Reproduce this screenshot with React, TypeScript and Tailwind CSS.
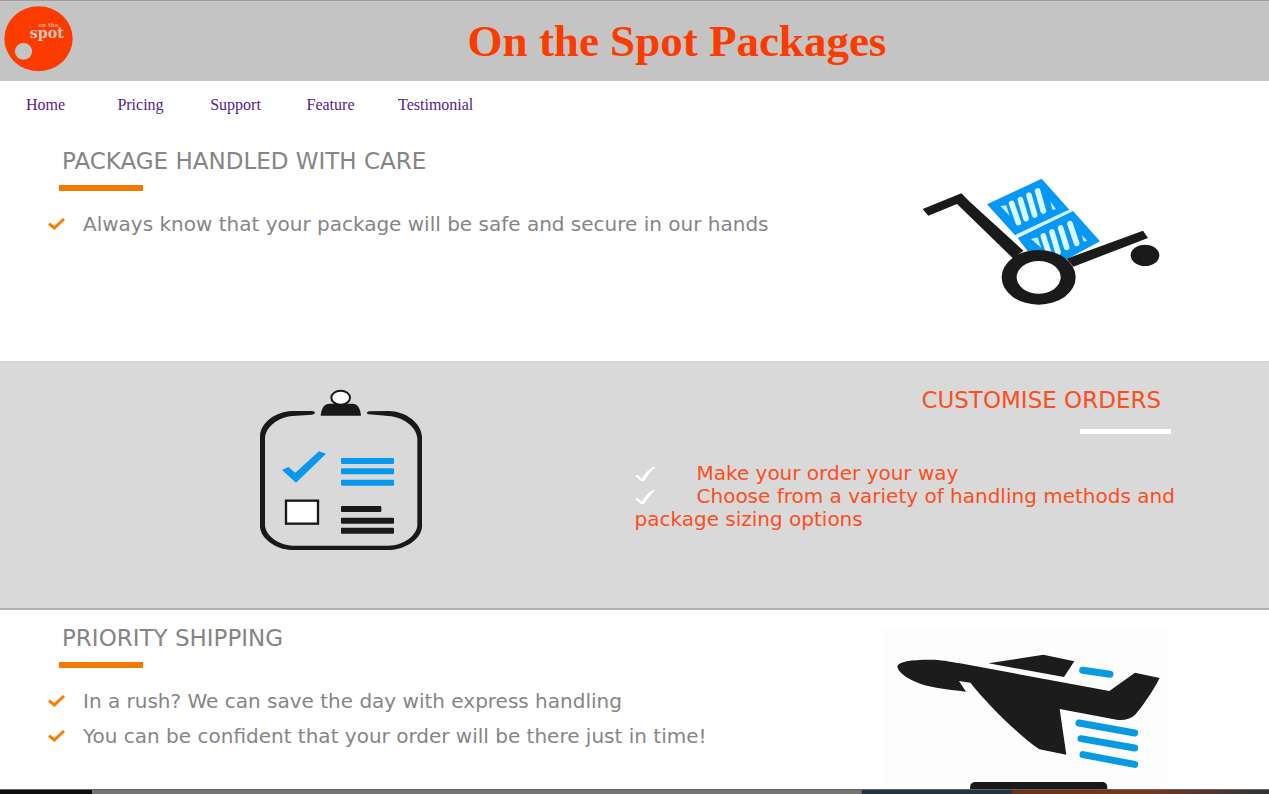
import React from "react";

const navItems = ["Home", "Pricing", "Support", "Feature", "Testimonial"];

function Logo() {
  return (
    <svg viewBox="0 0 207 198" className="h-[66px] w-[69px]" role="img" aria-label="On the Spot">
      <ellipse cx="103.5" cy="98" rx="102.5" ry="97.5" fill="#fb3b00" />
      <ellipse cx="58.5" cy="136" rx="26" ry="25" fill="#c4c4c4" />
      <text fontWeight="700" fontFamily="DejaVu Serif, serif">
        <tspan x="103" y="62" fontSize="17" fill="#dda793">on the</tspan>
        <tspan x="77" y="96" fontSize="43" fill="#cfc0ba">spot</tspan>
      </text>
    </svg>
  );
}

function Tick({ className }: { className: string }) {
  return (
    <svg viewBox="0 0 51 36" className={className} fill="none" stroke="currentColor" aria-hidden="true">
      <path d="M3 17 L19 30 L48 3" strokeWidth="9" />
    </svg>
  );
}

function LightTick() {
  return (
    <svg viewBox="0 0 63 48" className="inline-block h-4 w-[21px] text-white" fill="currentColor" aria-hidden="true">
      <path d="M0 27 L8 23 L20 35 C31 19 41 6 54 0 L61 0 C49 11 37 26 27 43 L19 43 Z" />
    </svg>
  );
}

function CartIcon() {
  return (
    <svg viewBox="0 0 870 480" className="h-[160px] w-[290px] shrink-0" role="img" aria-label="Hand truck with parcels">
      <path d="M261 133 L425 56 L508 149 L345 226 Z" fill="#0798f5" />
      <path d="M353 234 L519 153 L600 244 L500 298 L430 276 L385 276 Z" fill="#0798f5" />
      <g stroke="#d8f8fc" strokeWidth="17" strokeLinecap="round" fill="none">
        <path d="M335 130 L355 188 M361 119 L378 176 M387 106 L404 165 M413 93 L430 153" />
        <path d="M430 228 L446 278 M456 216 L474 277 M482 204 L500 262 M510 191 L530 250" />
      </g>
      <path d="M301 138 L319 136 L329 168 Z M451 124 L468 148 L457 149 Z M393 237 L413 232 L424 264 Z M545 225 L562 242 L551 245 Z" fill="#c0f0fa" />
      <path d="M346 229 L512 151" stroke="#c7f6f7" strokeWidth="7" />
      <path d="M68 147 L184 100 L210 126 L370 272 L340 296 L171 132 L85 167 Z" fill="#1b1a1a" />
      <path d="M500 296 L729 212 L744 234 L520 320 Z" fill="#1b1a1a" />
      <ellipse cx="416" cy="352" rx="111" ry="82" fill="#1b1a1a" />
      <ellipse cx="416" cy="352" rx="66" ry="49" fill="#ffffff" />
      <ellipse cx="735" cy="286" rx="43" ry="32" fill="#1b1a1a" />
    </svg>
  );
}

function ClipboardIcon() {
  return (
    <svg viewBox="0 0 600 570" className="h-[190px] w-[200px] shrink-0" role="img" aria-label="Order checklist">
      <path d="M216 108 L155 108 C110 110 61 140 60 185 L60 455 C62 490 106 523 155 525 L450 525 C500 522 544 490 546 455 L546 185 C544 145 498 108 445 108 L388 109 C378 111 378 117 388 118 L445 123 C490 126 529 155 532 190 L532 452 C529 482 490 511 445 512 L158 512 C115 510 78 482 75 452 L75 190 C77 155 115 126 158 123 L216 119 C228 117 228 110 216 108 Z" fill="#191919" />
      <path d="M242 122 C244 100 252 86 270 86 L337 86 C353 86 361 100 363 122 Z" fill="#191919" />
      <ellipse cx="302" cy="68" rx="28" ry="21" fill="#ffffff" stroke="#191919" strokeWidth="6" />
      <path d="M126 285 L145 276 L166 293 L237 229 L258 236 L168 323 Z" fill="#0798ec" />
      <g fill="#0798ec">
        <rect x="303" y="249" width="159" height="18" rx="3" />
        <rect x="303" y="280" width="159" height="18" rx="3" />
        <rect x="303" y="314" width="159" height="18" rx="3" />
      </g>
      <rect x="138" y="377" width="96" height="69" fill="#ffffff" stroke="#191919" strokeWidth="7" />
      <g fill="#191919">
        <rect x="303" y="393" width="121" height="18" rx="3" />
        <rect x="303" y="428" width="159" height="18" rx="3" />
        <rect x="303" y="458" width="159" height="18" rx="3" />
      </g>
    </svg>
  );
}

function PlaneIcon() {
  return (
    <svg viewBox="36 24 858 483" className="h-[161px] w-[286px] shrink-0 bg-[#fdfdfd]" role="img" aria-label="Cargo plane taking off">
      <path d="M82 138 C88 125 120 119 180 119 C215 119 235 124 270 130 L718 213 L795 158 L869 174 C845 220 815 262 795 285 C780 298 760 302 740 299 L569 267 L589 404 L508 388 C445 345 355 255 301 188 L267 183 L288 215 C230 209 170 201 140 187 C105 173 82 153 82 138 Z" fill="#1d1c1c" />
      <path d="M355 130 L520 104 L613 124 L582 171 Z" fill="#1d1c1c" />
      <g stroke="#079ae0" strokeLinecap="round" strokeWidth="21" fill="none">
        <path d="M638 151 L720 163" />
        <path d="M627 309 L794 339" />
        <path d="M633 356 L794 384" />
        <path d="M639 404 L794 433" />
      </g>
      <path d="M300 507 C300 492 304 486 318 486 L696 486 C708 486 712 492 712 507 Z" fill="#1b1a1a" />
    </svg>
  );
}

interface FeatureProps {
  title: string;
  points: string[];
  children: React.ReactNode;
}

function Feature({ title, points, children }: FeatureProps) {
  return (
    <section className="flex items-start justify-between gap-6">
      <div className="min-w-0 pl-12">
        <h2 className="pl-[14px] text-[23px] leading-6 text-[#858585]">{title}</h2>
        <div className="mt-3 ml-[11px] h-[6px] w-[84px] bg-[#f47900]" />
        <ul className="mt-[21px] flex flex-col gap-[11px] text-[20px] leading-6 text-[#858585]">
          {points.map((point) => (
            <li key={point} className="flex items-center gap-[18px]">
              <Tick className="h-3 w-[17px] shrink-0 text-[#ff7a00]" />
              {point}
            </li>
          ))}
        </ul>
      </div>
      {children}
    </section>
  );
}

export default function App() {
  return (
    <div className="bg-white font-['DejaVu_Sans',sans-serif]">
      <header className="flex items-center border-t border-[#9d9d9d] bg-[#c4c4c4] pt-[5px] pb-[9px] pl-1">
        <Logo />
        <h1 className="flex-1 pt-1 pl-3 text-center font-['Liberation_Serif',serif] text-[45px] leading-[52px] font-bold text-[#fb3b00]">
          On the Spot Packages
        </h1>
      </header>

      <nav className="py-3">
        <ul className="flex gap-1 font-['Liberation_Serif',serif] text-base text-[#551a8b]">
          {navItems.map((item) => (
            <li key={item} className="min-w-[91px] px-[18px] text-center">
              <a href={"#" + item.toLowerCase()}>{item}</a>
            </li>
          ))}
        </ul>
      </nav>

      <main>
        <div className="min-h-[232px] pt-5 pr-[79px]">
          <Feature
            title="PACKAGE HANDLED WITH CARE"
            points={["Always know that your package will be safe and secure in our hands"]}
          >
            <div className="pt-[11px]">
              <CartIcon />
            </div>
          </Feature>
        </div>

        <section className="grid min-h-[249px] grid-cols-2 border-b-2 border-[#b0b0b0] bg-[#d9d9d9] pt-[14px]">
          <div className="pl-60">
            <ClipboardIcon />
          </div>
          <div className="pt-[13px] pr-[88px] text-[#fb4f1c]">
            <h2 className="pr-5 text-right text-[23px] leading-6">CUSTOMISE ORDERS</h2>
            <div className="mt-[17px] mr-[10px] ml-auto h-[5px] w-[91px] bg-white" />
            <ul className="mt-7 text-[20px] leading-[23px]">
              <li>
                <LightTick />
                <span className="pl-[41px]">Make your order your way</span>
              </li>
              <li>
                <LightTick />
                <span className="pl-[41px]">Choose from a variety of handling methods and package sizing options</span>
              </li>
            </ul>
          </div>
        </section>

        <div className="pt-4 pr-[101px]">
          <Feature
            title="PRIORITY SHIPPING"
            points={[
              "In a rush? We can save the day with express handling",
              "You can be confident that your order will be there just in time!",
            ]}
          >
            <div className="pt-[2px]">
              <PlaneIcon />
            </div>
          </Feature>
        </div>
      </main>

      <footer className="flex h-[5px] border-t border-[#626262]">
        <div className="w-[92px] bg-[#110b0b]" />
        <div className="flex-1 border-r border-[#626262] bg-[#757575]" />
        <div className="w-[150px] bg-[#263340]" />
        <div className="w-[257px] bg-linear-to-r from-[#6e3018] via-[#7a3518] to-[#30313a]" />
      </footer>
    </div>
  );
}
